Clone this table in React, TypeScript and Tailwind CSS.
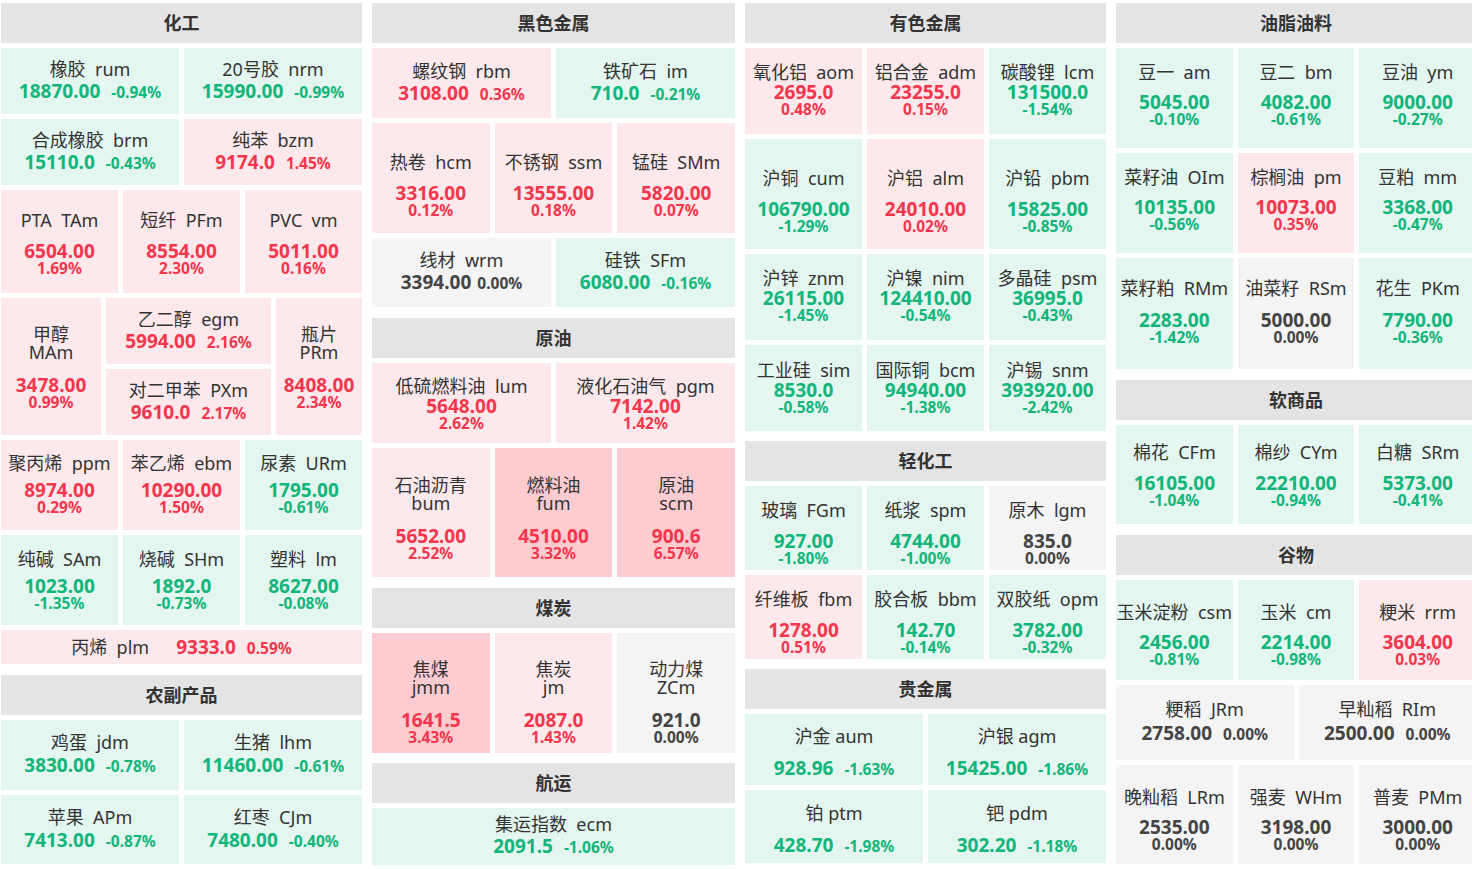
type Tone = 'g' | 'r' | 'R' | 'z'
type Item = [string, string, string, string, Tone]

const bg: Record<Tone, string> = {
  g: 'bg-[#e3f6ef]',
  r: 'bg-[#fde9ec]',
  R: 'bg-[#fdccd1]',
  z: 'bg-[#f4f4f4]',
}
const fg: Record<Tone, string> = {
  g: 'text-[#12b57a]',
  r: 'text-[#f4364c]',
  R: 'text-[#f4364c]',
  z: 'text-[#444]',
}

type Mode = 'inline' | 'stack' | 'split' | 'line'

function Tile({
  it,
  mode,
  sp = '',
  sh = '',
  w = 'flex-1',
  one = false,
  pg = 'ml-[11px]',
}: {
  it: Item
  mode: Mode
  sp?: string
  sh?: string
  w?: string
  one?: boolean
  pg?: string
}) {
  const [n, c, v, p, t] = it
  const name = one ? `${n} ${c}` : `${n}  ${c}`
  const box = `${w} min-w-0 ${bg[t]} ${sh} flex flex-col items-center justify-center`

  if (mode === 'line') {
    return (
      <div className={`${w} ${bg[t]} flex items-baseline justify-center`}>
        <span className="text-[18px] leading-[34px] text-[#333] whitespace-pre">{name}</span>
        <span className={`ml-[27px] text-[19px] font-bold ${fg[t]}`}>{v}</span>
        <span className={`ml-[11px] text-[15.5px] font-bold ${fg[t]}`}>{p}</span>
      </div>
    )
  }

  if (mode === 'inline') {
    return (
      <div className={box}>
        <div className="text-[18px] leading-[22px] text-[#333] whitespace-pre">{name}</div>
        <div className={`flex items-baseline font-bold ${fg[t]} ${sp}`}>
          <span className="text-[19px] leading-[22px]">{v}</span>
          <span className={`text-[15.5px] ${pg}`}>{p}</span>
        </div>
      </div>
    )
  }

  return (
    <div className={box}>
      {mode === 'split' ? (
        <div className="text-[18px] leading-[18px] text-[#333] text-center">
          <div>{n}</div>
          <div>{c}</div>
        </div>
      ) : (
        <div className="text-[18px] leading-[22px] text-[#333] whitespace-pre">{name}</div>
      )}
      <div className={`text-[19px] leading-[18px] font-bold ${fg[t]} ${mode === 'split' ? 'mt-[15px]' : sp}`}>{v}</div>
      <div className={`text-[15.5px] leading-[16px] font-bold ${fg[t]}`}>{p}</div>
    </div>
  )
}

function Head({ title }: { title: string }) {
  return (
    <div className="h-[40px] bg-[#e4e4e4] flex items-center justify-center text-[18px] font-bold text-[#333]">
      {title}
    </div>
  )
}

function Section({ title, mt = '', children }: { title: string; mt?: string; children: React.ReactNode }) {
  return (
    <div className={`flex flex-col gap-[5px] ${mt}`}>
      <Head title={title} />
      {children}
    </div>
  )
}

function Row({ h, children }: { h: string; children: React.ReactNode }) {
  return <div className={`flex gap-[5px] ${h}`}>{children}</div>
}

export default function App() {
  return (
    <div className="w-[1472px] h-[869px] overflow-hidden bg-white font-['Noto_Sans','Noto_Sans_CJK_SC',sans-serif]">
      <div className="flex gap-[10px] pl-[1px] pt-[3px] w-[1480px]">
        {/* column 1 */}
        <div className="w-[361px] shrink-0 flex flex-col">
          <Section title="化工">
            <Row h="h-[66px]">
              <Tile mode="inline" it={['橡胶', 'rum', '18870.00', '-0.94%', 'g']} />
              <Tile mode="inline" it={['20号胶', 'nrm', '15990.00', '-0.99%', 'g']} />
            </Row>
            <Row h="h-[66px]">
              <Tile mode="inline" it={['合成橡胶', 'brm', '15110.0', '-0.43%', 'g']} />
              <Tile mode="inline" it={['纯苯', 'bzm', '9174.0', '1.45%', 'r']} />
            </Row>
            <Row h="h-[103px]">
              <Tile mode="stack" sp="mt-[11px]" sh="pt-[2px]" it={['PTA', 'TAm', '6504.00', '1.69%', 'r']} />
              <Tile mode="stack" sp="mt-[11px]" sh="pt-[2px]" it={['短纤', 'PFm', '8554.00', '2.30%', 'r']} />
              <Tile mode="stack" sp="mt-[11px]" sh="pt-[2px]" it={['PVC', 'vm', '5011.00', '0.16%', 'r']} />
            </Row>
            <Row h="h-[137px]">
              <Tile mode="split" w="w-[100px] shrink-0" sh="pt-[2px]" it={['甲醇', 'MAm', '3478.00', '0.99%', 'r']} />
              <div className="w-[165px] shrink-0 flex flex-col gap-[5px]">
                <Tile mode="inline" it={['乙二醇', 'egm', '5994.00', '2.16%', 'r']} />
                <Tile mode="inline" it={['对二甲苯', 'PXm', '9610.0', '2.17%', 'r']} />
              </div>
              <Tile mode="split" sh="pt-[2px]" it={['瓶片', 'PRm', '8408.00', '2.34%', 'r']} />
            </Row>
            <Row h="h-[90px]">
              <Tile mode="stack" sp="mt-[7px]" sh="pb-[4px]" it={['聚丙烯', 'ppm', '8974.00', '0.29%', 'r']} />
              <Tile mode="stack" sp="mt-[7px]" sh="pb-[4px]" it={['苯乙烯', 'ebm', '10290.00', '1.50%', 'r']} />
              <Tile mode="stack" sp="mt-[7px]" sh="pb-[4px]" it={['尿素', 'URm', '1795.00', '-0.61%', 'g']} />
            </Row>
            <Row h="h-[90px]">
              <Tile mode="stack" sp="mt-[7px]" sh="pb-[2px]" it={['纯碱', 'SAm', '1023.00', '-1.35%', 'g']} />
              <Tile mode="stack" sp="mt-[7px]" sh="pb-[2px]" it={['烧碱', 'SHm', '1892.0', '-0.73%', 'g']} />
              <Tile mode="stack" sp="mt-[7px]" sh="pb-[2px]" it={['塑料', 'lm', '8627.00', '-0.08%', 'g']} />
            </Row>
            <Row h="h-[34px]">
              <Tile mode="line" it={['丙烯', 'plm', '9333.0', '0.59%', 'r']} />
            </Row>
          </Section>
          <Section title="农副产品" mt="mt-[11px]">
            <Row h="h-[70px]">
              <Tile mode="inline" sp="mt-[1px]" it={['鸡蛋', 'jdm', '3830.00', '-0.78%', 'g']} />
              <Tile mode="inline" sp="mt-[1px]" it={['生猪', 'lhm', '11460.00', '-0.61%', 'g']} />
            </Row>
            <Row h="h-[69px]">
              <Tile mode="inline" sp="mt-[1px]" it={['苹果', 'APm', '7413.00', '-0.87%', 'g']} />
              <Tile mode="inline" sp="mt-[1px]" it={['红枣', 'CJm', '7480.00', '-0.40%', 'g']} />
            </Row>
          </Section>
        </div>

        {/* column 2 */}
        <div className="w-[363px] shrink-0 flex flex-col">
          <Section title="黑色金属">
            <Row h="h-[70px]">
              <Tile mode="inline" it={['螺纹钢', 'rbm', '3108.00', '0.36%', 'r']} />
              <Tile mode="inline" it={['铁矿石', 'im', '710.0', '-0.21%', 'g']} />
            </Row>
            <Row h="h-[110px]">
              <Tile mode="stack" sp="mt-[11px]" sh="pt-[12px]" it={['热卷', 'hcm', '3316.00', '0.12%', 'r']} />
              <Tile mode="stack" sp="mt-[11px]" sh="pt-[12px]" it={['不锈钢', 'ssm', '13555.00', '0.18%', 'r']} />
              <Tile mode="stack" sp="mt-[11px]" sh="pt-[12px]" it={['锰硅', 'SMm', '5820.00', '0.07%', 'r']} />
            </Row>
            <Row h="h-[69px]">
              <Tile mode="inline" pg="ml-[6px]" it={['线材', 'wrm', '3394.00', '0.00%', 'z']} />
              <Tile mode="inline" it={['硅铁', 'SFm', '6080.00', '-0.16%', 'g']} />
            </Row>
          </Section>
          <Section title="原油" mt="mt-[11px]">
            <Row h="h-[80px]">
              <Tile mode="stack" it={['低硫燃料油', 'lum', '5648.00', '2.62%', 'r']} />
              <Tile mode="stack" it={['液化石油气', 'pgm', '7142.00', '1.42%', 'r']} />
            </Row>
            <Row h="h-[129px]">
              <Tile mode="split" sh="pt-[12px]" it={['石油沥青', 'bum', '5652.00', '2.52%', 'r']} />
              <Tile mode="split" sh="pt-[12px]" it={['燃料油', 'fum', '4510.00', '3.32%', 'R']} />
              <Tile mode="split" sh="pt-[12px]" it={['原油', 'scm', '900.6', '6.57%', 'R']} />
            </Row>
          </Section>
          <Section title="煤炭" mt="mt-[11px]">
            <Row h="h-[120px]">
              <Tile mode="split" sh="pt-[18px]" it={['焦煤', 'jmm', '1641.5', '3.43%', 'R']} />
              <Tile mode="split" sh="pt-[18px]" it={['焦炭', 'jm', '2087.0', '1.43%', 'r']} />
              <Tile mode="split" sh="pt-[18px]" it={['动力煤', 'ZCm', '921.0', '0.00%', 'z']} />
            </Row>
          </Section>
          <Section title="航运" mt="mt-[10px]">
            <Row h="h-[57px]">
              <Tile mode="inline" it={['集运指数', 'ecm', '2091.5', '-1.06%', 'g']} />
            </Row>
          </Section>
        </div>

        {/* column 3 */}
        <div className="w-[361px] shrink-0 flex flex-col">
          <Section title="有色金属">
            <Row h="h-[86px]">
              <Tile mode="stack" sh="pb-[4px]" it={['氧化铝', 'aom', '2695.0', '0.48%', 'r']} />
              <Tile mode="stack" sh="pb-[4px]" it={['铝合金', 'adm', '23255.0', '0.15%', 'r']} />
              <Tile mode="stack" sh="pb-[4px]" it={['碳酸锂', 'lcm', '131500.0', '-1.54%', 'g']} />
            </Row>
            <Row h="h-[110px]">
              <Tile mode="stack" sp="mt-[11px]" sh="pt-[12px]" it={['沪铜', 'cum', '106790.00', '-1.29%', 'g']} />
              <Tile mode="stack" sp="mt-[11px]" sh="pt-[12px]" it={['沪铝', 'alm', '24010.00', '0.02%', 'r']} />
              <Tile mode="stack" sp="mt-[11px]" sh="pt-[12px]" it={['沪铅', 'pbm', '15825.00', '-0.85%', 'g']} />
            </Row>
            <Row h="h-[86px]">
              <Tile mode="stack" sh="pb-[4px]" it={['沪锌', 'znm', '26115.00', '-1.45%', 'g']} />
              <Tile mode="stack" sh="pb-[4px]" it={['沪镍', 'nim', '124410.00', '-0.54%', 'g']} />
              <Tile mode="stack" sh="pb-[4px]" it={['多晶硅', 'psm', '36995.0', '-0.43%', 'g']} />
            </Row>
            <Row h="h-[86px]">
              <Tile mode="stack" sh="pb-[2px]" it={['工业硅', 'sim', '8530.0', '-0.58%', 'g']} />
              <Tile mode="stack" sh="pb-[2px]" it={['国际铜', 'bcm', '94940.00', '-1.38%', 'g']} />
              <Tile mode="stack" sh="pb-[2px]" it={['沪锡', 'snm', '393920.00', '-2.42%', 'g']} />
            </Row>
          </Section>
          <Section title="轻化工" mt="mt-[10px]">
            <Row h="h-[84px]">
              <Tile mode="stack" sp="mt-[11px]" sh="pt-[8px]" it={['玻璃', 'FGm', '927.00', '-1.80%', 'g']} />
              <Tile mode="stack" sp="mt-[11px]" sh="pt-[8px]" it={['纸浆', 'spm', '4744.00', '-1.00%', 'g']} />
              <Tile mode="stack" sp="mt-[11px]" sh="pt-[8px]" it={['原木', 'lgm', '835.0', '0.00%', 'z']} />
            </Row>
            <Row h="h-[84px]">
              <Tile mode="stack" sp="mt-[11px]" sh="pt-[8px]" it={['纤维板', 'fbm', '1278.00', '0.51%', 'r']} />
              <Tile mode="stack" sp="mt-[11px]" sh="pt-[8px]" it={['胶合板', 'bbm', '142.70', '-0.14%', 'g']} />
              <Tile mode="stack" sp="mt-[11px]" sh="pt-[8px]" it={['双胶纸', 'opm', '3782.00', '-0.32%', 'g']} />
            </Row>
          </Section>
          <Section title="贵金属" mt="mt-[10px]">
            <Row h="h-[71px]">
              <Tile mode="inline" one sp="mt-[10px]" sh="pt-[8px]" it={['沪金', 'aum', '928.96', '-1.63%', 'g']} />
              <Tile mode="inline" one sp="mt-[10px]" sh="pt-[8px]" it={['沪银', 'agm', '15425.00', '-1.86%', 'g']} />
            </Row>
            <Row h="h-[73px]">
              <Tile mode="inline" one sp="mt-[10px]" sh="pt-[8px]" it={['铂', 'ptm', '428.70', '-1.98%', 'g']} />
              <Tile mode="inline" one sp="mt-[10px]" sh="pt-[8px]" it={['钯', 'pdm', '302.20', '-1.18%', 'g']} />
            </Row>
          </Section>
        </div>

        {/* column 4 */}
        <div className="w-[360px] shrink-0 flex flex-col">
          <Section title="油脂油料">
            <Row h="h-[100px]">
              <Tile mode="stack" sp="mt-[10px]" sh="pb-[8px]" it={['豆一', 'am', '5045.00', '-0.10%', 'g']} />
              <Tile mode="stack" sp="mt-[10px]" sh="pb-[8px]" it={['豆二', 'bm', '4082.00', '-0.61%', 'g']} />
              <Tile mode="stack" sp="mt-[10px]" sh="pb-[8px]" it={['豆油', 'ym', '9000.00', '-0.27%', 'g']} />
            </Row>
            <Row h="h-[100px]">
              <Tile mode="stack" sp="mt-[10px]" sh="pb-[8px]" it={['菜籽油', 'OIm', '10135.00', '-0.56%', 'g']} />
              <Tile mode="stack" sp="mt-[10px]" sh="pb-[8px]" it={['棕榈油', 'pm', '10073.00', '0.35%', 'r']} />
              <Tile mode="stack" sp="mt-[10px]" sh="pb-[8px]" it={['豆粕', 'mm', '3368.00', '-0.47%', 'g']} />
            </Row>
            <Row h="h-[111px]">
              <Tile mode="stack" sp="mt-[12px]" sh="pb-[6px]" it={['菜籽粕', 'RMm', '2283.00', '-1.42%', 'g']} />
              <Tile mode="stack" sp="mt-[12px]" sh="pb-[6px]" it={['油菜籽', 'RSm', '5000.00', '0.00%', 'z']} />
              <Tile mode="stack" sp="mt-[12px]" sh="pb-[6px]" it={['花生', 'PKm', '7790.00', '-0.36%', 'g']} />
            </Row>
          </Section>
          <Section title="软商品" mt="mt-[11px]">
            <Row h="h-[99px]">
              <Tile mode="stack" sp="mt-[11px]" it={['棉花', 'CFm', '16105.00', '-1.04%', 'g']} />
              <Tile mode="stack" sp="mt-[11px]" it={['棉纱', 'CYm', '22210.00', '-0.94%', 'g']} />
              <Tile mode="stack" sp="mt-[11px]" it={['白糖', 'SRm', '5373.00', '-0.41%', 'g']} />
            </Row>
          </Section>
          <Section title="谷物" mt="mt-[11px]">
            <Row h="h-[100px]">
              <Tile mode="stack" sp="mt-[10px]" sh="pt-[8px]" it={['玉米淀粉', 'csm', '2456.00', '-0.81%', 'g']} />
              <Tile mode="stack" sp="mt-[10px]" sh="pt-[8px]" it={['玉米', 'cm', '2214.00', '-0.98%', 'g']} />
              <Tile mode="stack" sp="mt-[10px]" sh="pt-[8px]" it={['粳米', 'rrm', '3604.00', '0.03%', 'r']} />
            </Row>
            <Row h="h-[75px]">
              <Tile mode="inline" sp="mt-[2px]" it={['粳稻', 'JRm', '2758.00', '0.00%', 'z']} />
              <Tile mode="inline" sp="mt-[2px]" it={['早籼稻', 'RIm', '2500.00', '0.00%', 'z']} />
            </Row>
            <Row h="h-[99px]">
              <Tile mode="stack" sp="mt-[10px]" sh="pt-[8px]" it={['晚籼稻', 'LRm', '2535.00', '0.00%', 'z']} />
              <Tile mode="stack" sp="mt-[10px]" sh="pt-[8px]" it={['强麦', 'WHm', '3198.00', '0.00%', 'z']} />
              <Tile mode="stack" sp="mt-[10px]" sh="pt-[8px]" it={['普麦', 'PMm', '3000.00', '0.00%', 'z']} />
            </Row>
          </Section>
        </div>
      </div>
    </div>
  )
}
